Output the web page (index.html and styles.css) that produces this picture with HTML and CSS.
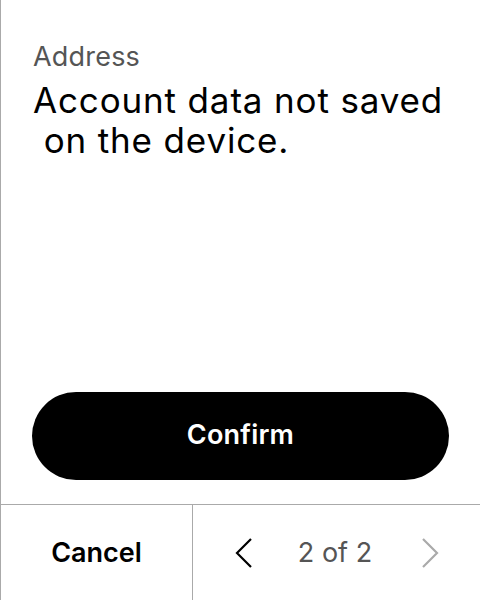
FILE: index.html
```html
<!DOCTYPE html>
<html>
<head>
<meta charset="utf-8">
<link rel="stylesheet" href="styles.css">
</head>
<body>
<div class="screen">
  <div class="content">
    <div class="label">Address</div>
    <div class="value">Account data not saved
 on the device.</div>
  </div>
  <div class="action">
    <button class="confirm">Confirm</button>
  </div>
  <div class="footer">
    <div class="cancel">Cancel</div>
    <div class="pager">
      <svg class="chev" width="17" height="30" viewBox="0 0 17 30"><path d="M16 1 L2 15 L16 29" fill="none" stroke="#000" stroke-width="2.2"/></svg>
      <span class="count">2 of 2</span>
      <svg class="chev" width="17" height="30" viewBox="0 0 17 30"><path d="M1 1 L15 15 L1 29" fill="none" stroke="#aaa" stroke-width="2.2"/></svg>
    </div>
  </div>
</div>
</body>
</html>
```
FILE: styles.css
```css
html, body { margin: 0; padding: 0; background: #fff; }
body { font-family: Inter, "Noto Sans", sans-serif; }
.screen {
  width: 480px; height: 600px; box-sizing: border-box;
  border-left: 1px solid #aaa;
  display: flex; flex-direction: column;
}
.content { flex: 1; padding: 40px 32px 0 32px; }
.label { font-size: 27px; line-height: 34px; color: #555; letter-spacing: 0.2px; }
.value { font-size: 35px; line-height: 40px; color: #000; white-space: pre-wrap; margin-top: 6px; letter-spacing: 0.85px; }
.action { padding: 0 31px 24px 31px; }
.confirm {
  width: 100%; height: 88px; border: 0; border-radius: 44px;
  background: #000; color: #fff; font-family: inherit;
  font-size: 27px; font-weight: 600; display: block; letter-spacing: 0.2px;
  padding: 0 0 3px 0;
}
.footer {
  height: 96px; box-sizing: border-box; border-top: 1px solid #aaa;
  display: flex;
}
.cancel {
  width: 191px; border-right: 1px solid #aaa;
  display: flex; align-items: center; justify-content: center;
  font-size: 27px; font-weight: 600; color: #000;
}
.pager {
  flex: 1; display: flex; align-items: center; justify-content: space-between;
  padding: 0 41px 0 42px;
}
.count { font-size: 27px; color: #555; margin-left: -4px; }
.chev { display: block; }
```
